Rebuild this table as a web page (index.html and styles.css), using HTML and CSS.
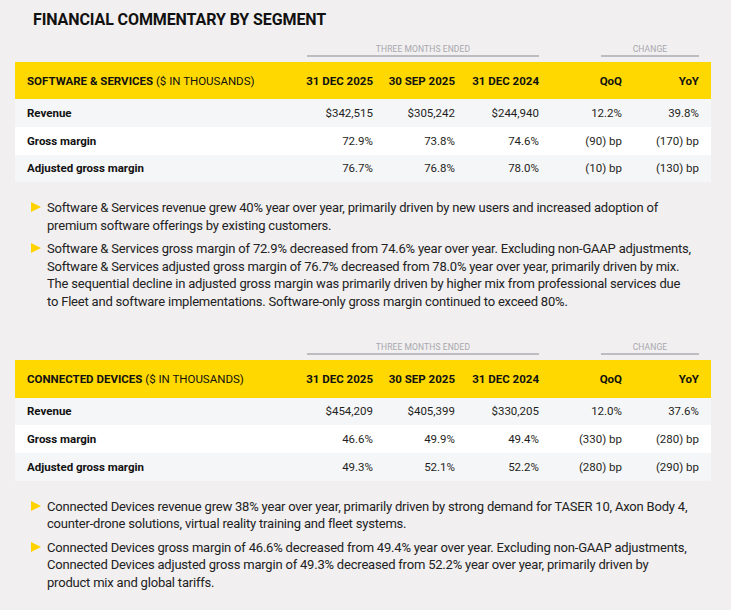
FILE: index.html
```html
<!DOCTYPE html>
<html lang="en">
<head>
<meta charset="utf-8">
<title>Financial Commentary by Segment</title>
<link rel="stylesheet" href="styles.css">
</head>
<body>
<main class="page">
  <h1 class="title">FINANCIAL COMMENTARY BY SEGMENT</h1>

  <section class="segment">
    <div class="groups">
      <div class="group group-months">THREE MONTHS ENDED</div>
      <div class="group group-change">CHANGE</div>
    </div>
    <div class="table">
      <div class="row head">
        <div class="cell label"><strong>SOFTWARE &amp; SERVICES</strong> ($ IN THOUSANDS)</div>
        <div class="cell">31 DEC 2025</div>
        <div class="cell">30 SEP 2025</div>
        <div class="cell">31 DEC 2024</div>
        <div class="cell">QoQ</div>
        <div class="cell">YoY</div>
      </div>
      <div class="row shade">
        <div class="cell label">Revenue</div>
        <div class="cell">$342,515</div>
        <div class="cell">$305,242</div>
        <div class="cell">$244,940</div>
        <div class="cell">12.2%</div>
        <div class="cell">39.8%</div>
      </div>
      <div class="row">
        <div class="cell label">Gross margin</div>
        <div class="cell">72.9%</div>
        <div class="cell">73.8%</div>
        <div class="cell">74.6%</div>
        <div class="cell">(90) bp</div>
        <div class="cell">(170) bp</div>
      </div>
      <div class="row shade">
        <div class="cell label">Adjusted gross margin</div>
        <div class="cell">76.7%</div>
        <div class="cell">76.8%</div>
        <div class="cell">78.0%</div>
        <div class="cell">(10) bp</div>
        <div class="cell">(130) bp</div>
      </div>
    </div>
    <ul class="notes">
      <li>Software &amp; Services revenue grew 40% year over year, primarily driven by new users and increased adoption of premium software offerings by existing customers.</li>
      <li>Software &amp; Services gross margin of 72.9% decreased from 74.6% year over year. Excluding non-GAAP adjustments, Software &amp; Services adjusted gross margin of 76.7% decreased from 78.0% year over year, primarily driven by mix. The sequential decline in adjusted gross margin was primarily driven by higher mix from professional services due to Fleet and software implementations. Software-only gross margin continued to exceed 80%.</li>
    </ul>
  </section>

  <section class="segment second">
    <div class="groups">
      <div class="group group-months">THREE MONTHS ENDED</div>
      <div class="group group-change">CHANGE</div>
    </div>
    <div class="table">
      <div class="row head">
        <div class="cell label"><strong>CONNECTED DEVICES</strong> ($ IN THOUSANDS)</div>
        <div class="cell">31 DEC 2025</div>
        <div class="cell">30 SEP 2025</div>
        <div class="cell">31 DEC 2024</div>
        <div class="cell">QoQ</div>
        <div class="cell">YoY</div>
      </div>
      <div class="row shade">
        <div class="cell label">Revenue</div>
        <div class="cell">$454,209</div>
        <div class="cell">$405,399</div>
        <div class="cell">$330,205</div>
        <div class="cell">12.0%</div>
        <div class="cell">37.6%</div>
      </div>
      <div class="row">
        <div class="cell label">Gross margin</div>
        <div class="cell">46.6%</div>
        <div class="cell">49.9%</div>
        <div class="cell">49.4%</div>
        <div class="cell">(330) bp</div>
        <div class="cell">(280) bp</div>
      </div>
      <div class="row shade">
        <div class="cell label">Adjusted gross margin</div>
        <div class="cell">49.3%</div>
        <div class="cell">52.1%</div>
        <div class="cell">52.2%</div>
        <div class="cell">(280) bp</div>
        <div class="cell">(290) bp</div>
      </div>
    </div>
    <ul class="notes">
      <li>Connected Devices revenue grew 38% year over year, primarily driven by strong demand for TASER 10, Axon Body 4, counter-drone solutions, virtual reality training and fleet systems.</li>
      <li>Connected Devices gross margin of 46.6% decreased from 49.4% year over year. Excluding non-GAAP adjustments, Connected Devices adjusted gross margin of 49.3% decreased from 52.2% year over year, primarily driven by product mix and global tariffs.</li>
    </ul>
  </section>
</main>
</body>
</html>
```

FILE: styles.css
```css
* { box-sizing: border-box; }

html, body {
  margin: 0;
  padding: 0;
  background: #f1eff0;
}

body {
  font-family: Roboto, "Liberation Sans", Arial, sans-serif;
  color: #1d1d1f;
}

.page {
  width: 731px;
  height: 610px;
  padding: 11px 20px 0 15px;
  overflow: hidden;
}

.title {
  margin: 0 0 14px 18px;
  font-size: 16px;
  line-height: 18px;
  font-weight: 700;
  color: #111;
  letter-spacing: -0.1px;
}

.segment.second {
  margin-top: 31px;
}

.groups,
.row {
  display: grid;
  grid-template-columns: 256px 90px 82px 84px 83px 77px;
  padding: 0 12px;
  width: 696px;
}

.groups {
  margin-bottom: 5px;
}

.group {
  font-size: 8.5px;
  line-height: 12px;
  color: #a7a7ad;
  text-align: center;
  border-bottom: 2px solid #bcbcc1;
  letter-spacing: 0.1px;
}

.group-months {
  grid-column: 2 / 5;
  margin-left: 24px;
}

.group-change {
  grid-column: 5 / 7;
  margin-left: 62px;
}

.table {
  width: 696px;
}

.row {
  height: 27.67px;
  align-items: center;
  background: #ffffff;
  font-size: 11.5px;
  color: #1f1f22;
}

.row.shade {
  background: #f5f6f8;
}

.row.head {
  height: 37.33px;
  background: #ffd800;
  font-weight: 700;
  color: #111;
}

.row.head .label {
  font-weight: 400;
  font-size: 11.5px;
}

.row.head .label strong {
  font-weight: 700;
}

.cell {
  text-align: right;
  white-space: nowrap;
}

.cell.label {
  text-align: left;
  font-weight: 700;
  color: #111;
}

.notes {
  list-style: none;
  margin: 17px 0 0 0;
  padding: 0 0 0 32px;
  width: 678px;
  font-size: 13px;
  letter-spacing: -0.2px;
  line-height: 17.5px;
  color: #222;
}

.notes li {
  position: relative;
  margin-bottom: 6px;
}

.notes li::before {
  content: "";
  position: absolute;
  left: -16px;
  top: 3px;
  width: 0;
  height: 0;
  border-top: 5.5px solid transparent;
  border-bottom: 5.5px solid transparent;
  border-left: 10px solid #ffd200;
}
```
